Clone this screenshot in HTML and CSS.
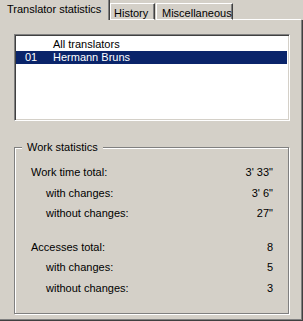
FILE: index.html
```html
<!DOCTYPE html>
<html lang="en">
<head>
  <meta charset="UTF-8" />
  <title>Translator statistics</title>
  <link rel="stylesheet" href="styles.css">
</head>
<body>
  <div class="tabs">
    <div class="tab tab-active">Translator statistics</div>
    <div class="tab tab-history">History</div>
    <div class="tab tab-misc">Miscellaneous</div>
    <div class="tab-fill"></div>
  </div>

  <div class="panel">
    <div class="listbox">
      <div class="list-row">
        <span class="list-no"></span>
        <span class="list-name">All translators</span>
      </div>
      <div class="list-row selected">
        <span class="list-no">01</span>
        <span class="list-name">Hermann Bruns</span>
      </div>
    </div>

    <fieldset class="group">
      <legend>Work statistics</legend>

      <div class="stat-block">
        <div class="stat-row"><span>Work time total:</span><span>3' 33"</span></div>
        <div class="stat-row sub"><span>with changes:</span><span>3' 6"</span></div>
        <div class="stat-row sub"><span>without changes:</span><span>27"</span></div>
      </div>

      <div class="stat-block">
        <div class="stat-row"><span>Accesses total:</span><span>8</span></div>
        <div class="stat-row sub"><span>with changes:</span><span>5</span></div>
        <div class="stat-row sub"><span>without changes:</span><span>3</span></div>
      </div>
    </fieldset>
  </div>
</body>
</html>
```

FILE: styles.css
```css
/* Reset */
* {
  margin: 0;
  padding: 0;
  box-sizing: border-box;
}

body {
  font-family: 'Liberation Sans', Arial, sans-serif;
  font-size: 11px;
  line-height: 13px;
  color: #000;
  background: #d4d0c8;
  width: 303px;
  height: 321px;
  overflow: hidden;
}

/* Tab strip */
.tabs {
  display: flex;
  align-items: flex-end;
  height: 20px;
}

.tab {
  height: 17px;
  padding-top: 3px;
  border-top: 1px solid #fff;
  border-left: 1px solid #fff;
  border-right: 1px solid #404040;
  border-bottom: 1px solid #fff;
  box-shadow: inset -1px 0 0 #808080;
  white-space: nowrap;
}

.tab-active {
  width: 110px;
  height: 20px;
  padding: 3px 0 0 7px;
  border-top: none;
  border-left: none;
  border-bottom: none;
}

.tab-history {
  width: 45px;
  padding-left: 3px;
}

.tab-misc {
  width: 77px;
  margin-left: 1px;
  padding-left: 5px;
}

.tab-fill {
  flex: 1;
  height: 1px;
  border-bottom: 1px solid #fff;
  margin-right: 2px;
}

/* Panel */
.panel {
  height: 301px;
  padding: 14px 0 0 14px;
  border-right: 1px solid #404040;
  border-bottom: 1px solid #404040;
  box-shadow: inset -1px -1px 0 #808080;
}

/* List box */
.listbox {
  width: 276px;
  height: 87px;
  background: #fff;
  border-top: 1px solid #808080;
  border-left: 1px solid #808080;
  border-right: 1px solid #fff;
  border-bottom: 1px solid #fff;
  box-shadow: inset 1px 1px 0 #404040, inset -1px -1px 0 #d4d0c8;
  padding: 3px 2px 0 1px;
}

.list-row {
  display: flex;
  height: 13px;
}

.list-row.selected {
  background: #0a246a;
  color: #fff;
}

.list-no {
  width: 37px;
  padding-left: 9px;
}

/* Group box */
.group {
  width: 275px;
  margin-top: 20px;
  border: 1px solid #808080;
  box-shadow: inset 1px 1px 0 #fff, 1px 1px 0 #fff;
  padding: 8px 0 15px 0;
}

.group legend {
  margin-left: 7px;
  padding: 0 5px;
  background: #d4d0c8;
}

.stat-block {
  padding: 0 15px 0 16px;
}

.stat-block + .stat-block {
  margin-top: 13px;
}

.stat-row {
  display: flex;
  justify-content: space-between;
  height: 20.5px;
  line-height: 20px;
}

.stat-row.sub {
  padding-left: 15px;
}
```
